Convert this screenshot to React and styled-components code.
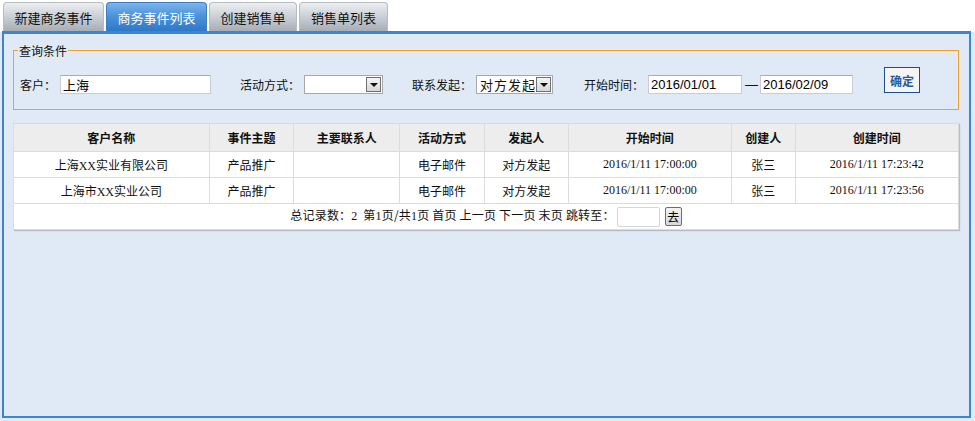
import React from "react";
import styled, { createGlobalStyle } from "styled-components";

const GlobalStyle = createGlobalStyle`
  html, body {
    margin: 0;
    padding: 0;
    background: #ffffff;
    font-family: "Liberation Sans", "Noto Sans CJK SC", sans-serif;
    font-size: 12px;
    color: #111;
  }
`;

const tabs = ["新建商务事件", "商务事件列表", "创建销售单", "销售单列表"];
const tabWidths = [101, 101, 88, 89];

const columns = [
  { title: "客户名称", width: 194 },
  { title: "事件主题", width: 84 },
  { title: "主要联系人", width: 105 },
  { title: "活动方式", width: 84 },
  { title: "发起人", width: 83 },
  { title: "开始时间", width: 162 },
  { title: "创建人", width: 63 },
  { title: "创建时间", width: 162 },
];

const rows = [
  ["上海XX实业有限公司", "产品推广", "", "电子邮件", "对方发起", "2016/1/11 17:00:00", "张三", "2016/1/11 17:23:42"],
  ["上海市XX实业公司", "产品推广", "", "电子邮件", "对方发起", "2016/1/11 17:00:00", "张三", "2016/1/11 17:23:56"],
];

export default function App() {
  return (
    <Page>
      <GlobalStyle />
      <TabBar>
        {tabs.map((t, i) => (
          <Tab key={t} $active={i === 1} $width={tabWidths[i]}>
            {t}
          </Tab>
        ))}
      </TabBar>
      <Panel>
        <Query>
          <legend>查询条件</legend>
          <Field>
            <Label>客户：</Label>
            <TextInput $width={151} defaultValue="上海" />
          </Field>
          <Field>
            <Label>活动方式：</Label>
            <Select $width={79}>
              <span></span>
              <Arrow />
            </Select>
          </Field>
          <Field>
            <Label>联系发起：</Label>
            <Select $width={77}>
              <span>对方发起</span>
              <Arrow />
            </Select>
          </Field>
          <Field $shift={2}>
            <Label>开始时间：</Label>
            <TextInput $width={94} defaultValue="2016/01/01" />
            <Dash>—</Dash>
            <TextInput $width={93} defaultValue="2016/02/09" />
          </Field>
          <OkButton>确定</OkButton>
        </Query>

        <Grid>
          <colgroup>
            {columns.map((c) => (
              <col key={c.title} width={c.width} />
            ))}
          </colgroup>
          <thead>
            <tr>
              {columns.map((c) => (
                <Th key={c.title}>{c.title}</Th>
              ))}
            </tr>
          </thead>
          <tbody>
            {rows.map((r, i) => (
              <tr key={i}>
                {r.map((v, j) => (
                  <Td key={j}>{v}</Td>
                ))}
              </tr>
            ))}
            <tr>
              <Pager colSpan={8}>
                总记录数：<Num>2</Num>&nbsp; 第<Num>1</Num>页/共<Num>1</Num>页 首页 上一页 下一页 末页 跳转至：
                <JumpInput />
                <GoButton>去</GoButton>
              </Pager>
            </tr>
          </tbody>
        </Grid>
      </Panel>
    </Page>
  );
}

const Page = styled.div`
  padding: 2px 4px 3px 2px;
  background: linear-gradient(#ffffff 0, #ffffff 32px, #dfeaf6 32px);
`;

const TabBar = styled.div`
  display: flex;
  gap: 2px;
  padding-left: 1px;
  height: 29px;
  align-items: flex-end;
`;

const Tab = styled.div`
  width: ${(p) => p.$width}px;
  height: 29px;
  box-sizing: border-box;
  display: flex;
  align-items: center;
  justify-content: center;
  border: 1px solid ${(p) => (p.$active ? "#3c7fc8" : "#b7bcc3")};
  border-bottom: none;
  border-radius: 4px 4px 0 0;
  font-family: "Noto Sans CJK SC", sans-serif;
  font-size: 13px;
  padding-top: 1px;
  color: ${(p) => (p.$active ? "#ffffff" : "#111")};
  background: ${(p) =>
    p.$active
      ? "linear-gradient(#7db4ea 0%, #4d93dc 45%, #2f78c6 100%)"
      : "linear-gradient(#eceef1 0%, #cdd2d8 45%, #a6adb6 100%)"};
`;

const Panel = styled.div`
  border: 2px solid #3a86d5;
  border-top-width: 3px;
  background: #dfeaf6;
  height: 387px;
  box-sizing: border-box;
  padding: 8px 10px 0 9px;
`;

const Query = styled.fieldset`
  margin: 0;
  border: 1px solid #f1a22c;
  padding: 16px 6px 15px 6px;
  display: flex;
  align-items: center;
  gap: 29px;

  legend {
    padding: 0 1px;
    margin-left: -2px;
    font-family: "Noto Sans CJK SC", sans-serif;
    font-size: 12px;
    color: #111;
  }
`;

const Field = styled.div`
  display: flex;
  align-items: center;
  margin-left: ${(p) => p.$shift || 0}px;
`;

const Label = styled.span`
  font-family: "Noto Sans CJK SC", sans-serif;
  font-size: 12px;
  margin-right: 4px;
  white-space: nowrap;
`;

const TextInput = styled.input`
  width: ${(p) => p.$width}px;
  height: 19px;
  box-sizing: border-box;
  border: 1px solid #c9ccd0;
  border-top-color: #a9adb2;
  padding: 0 2px;
  font-family: "Liberation Sans", "Noto Sans CJK SC", sans-serif;
  font-size: 13px;
  color: #000;
  background: #fff;
  outline: none;
`;

const Dash = styled.span`
  margin: 0 2px 0 3px;
  font-size: 13px;
`;

const Select = styled.div`
  width: ${(p) => p.$width}px;
  height: 19px;
  box-sizing: border-box;
  border: 1px solid #a5a9ae;
  background: #fff;
  display: flex;
  align-items: center;
  justify-content: space-between;
  padding: 1px;
  font-family: "Noto Sans CJK SC", sans-serif;
  font-size: 13px;
  letter-spacing: 1px;

  span {
    padding-left: 2px;
    white-space: nowrap;
    overflow: hidden;
  }
`;

const Arrow = styled.div`
  width: 15px;
  height: 15px;
  box-sizing: border-box;
  border: 1px solid #707070;
  background: linear-gradient(#f4f4f4, #d8d8d8);
  position: relative;
  flex: none;

  &::after {
    content: "";
    position: absolute;
    left: 3px;
    top: 5px;
    border-left: 4px solid transparent;
    border-right: 4px solid transparent;
    border-top: 4px solid #111;
  }
`;

const OkButton = styled.button`
  width: 36px;
  height: 26px;
  margin-top: -9px;
  margin-left: 2px;
  box-sizing: border-box;
  border: 1px solid #1d4f8c;
  background: #f4f4f4;
  color: #2a5b98;
  font-family: "Noto Sans CJK SC", sans-serif;
  font-weight: bold;
  font-size: 12px;
  padding: 0;
`;

const Grid = styled.table`
  margin-top: 13px;
  width: 946px;
  border-collapse: collapse;
  background: #fff;
  box-shadow: 1px 1px 1px #b8bcc2;
  table-layout: fixed;
`;

const Th = styled.th`
  height: 27px;
  background: #ededed;
  border: 1px solid #dcdcdc;
  font-family: "Noto Sans CJK SC", sans-serif;
  font-size: 12px;
  font-weight: bold;
  padding: 0;
`;

const Td = styled.td`
  height: 25px;
  border: 1px solid #dcdcdc;
  text-align: center;
  padding: 0;
  font-family: "Liberation Serif", "Noto Sans CJK SC", serif;
  font-size: 12px;
  color: #111;
`;

const Pager = styled.td`
  height: 25px;
  border: 1px solid #dcdcdc;
  text-align: center;
  padding: 0;
  font-family: "Noto Sans CJK SC", sans-serif;
  font-size: 12px;
  white-space: nowrap;
  letter-spacing: 0.2px;
`;

const Num = styled.span`
  font-family: "Liberation Serif", serif;
`;

const JumpInput = styled.input`
  width: 43px;
  height: 20px;
  box-sizing: border-box;
  border: 1px solid #d3d6da;
  border-radius: 2px;
  vertical-align: middle;
  margin-left: 2px;
`;

const GoButton = styled.button`
  width: 17px;
  height: 19px;
  box-sizing: border-box;
  border: 1px solid #6d6d6d;
  border-radius: 2px;
  background: linear-gradient(#f2f2f2, #d9d9d9);
  font-family: "Noto Sans CJK SC", sans-serif;
  font-size: 12px;
  padding: 0;
  margin-left: 5px;
  vertical-align: middle;
`;
